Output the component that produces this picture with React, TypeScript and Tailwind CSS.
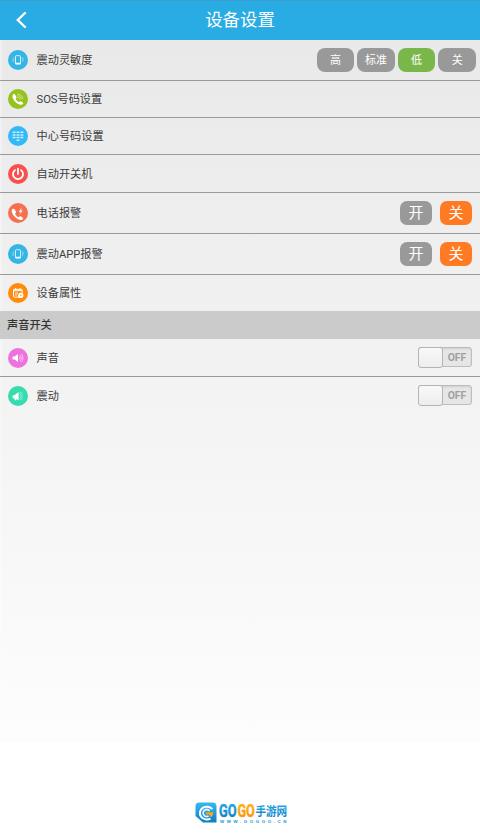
import React from "react";

type IconName =
  | "shake"
  | "sos"
  | "keypad"
  | "power"
  | "call"
  | "device"
  | "sound"
  | "vibrate";

const HANDSET =
  "M5.2 5.4 C4.1 6.3 4.2 8 5.2 9.9 C6.7 12.6 9 14.7 11.6 15.6 C13 16 14.4 15.8 15.1 14.8 C15.4 14.3 15.2 13.9 14.8 13.6 L12.9 12.3 C12.4 12 11.9 12.1 11.5 12.6 L10.9 13.2 C9.5 12.5 8.3 11.3 7.6 9.8 L8.2 9.1 C8.6 8.7 8.6 8.3 8.4 7.8 L7.2 5.7 C6.8 5 5.9 4.8 5.2 5.4 Z";

const glyphs: Record<IconName, { color: string; art: React.ReactNode }> = {
  shake: {
    color: "#33b5e5",
    art: (
      <g fill="none" stroke="#fff">
        <rect x="7.5" y="5.7" width="5" height="8.3" rx="0.8" strokeWidth="0.9" opacity="0.9" />
        <path d="M7.5 13.5h5" strokeWidth="1.6" opacity="0.9" />
        <path d="M5.6 7.2v4.6M14.4 7.2v4.6" strokeWidth="0.7" opacity="0.5" />
        <path d="M4.4 9v3M15.6 7.8v3" strokeWidth="0.6" opacity="0.4" />
      </g>
    ),
  },
  sos: {
    color: "#97c11c",
    art: (
      <g>
        <path d={HANDSET} fill="#fff" />
        <g fill="none" stroke="#fff" strokeWidth="0.9" opacity="0.6">
          <path d="M9 8.2c1.4.2 2.4 1.1 2.8 2.5" />
          <path d="M9.2 6.5c2.2.3 3.7 1.7 4.2 3.9" />
          <path d="M9.4 4.9c3 .3 5.1 2.3 5.6 5.2" />
        </g>
      </g>
    ),
  },
  keypad: {
    color: "#33b9f5",
    art: (
      <path
        d="M4.6 6.2h3M8.5 6.2h3M12.4 6.2h3M4.6 8.9h3M8.5 8.9h3M12.4 8.9h3M4.6 11.6h3M8.5 11.6h3M12.4 11.6h3M8.5 14.3h3"
        stroke="#fff"
        strokeWidth="1.5"
        opacity="0.75"
      />
    ),
  },
  power: {
    color: "#f9504f",
    art: (
      <g fill="none" stroke="#fff" strokeWidth="1.8" strokeLinecap="round">
        <path d="M7 6.1a5 5 0 1 0 6 0" />
        <path d="M10 4.6v5.4" />
      </g>
    ),
  },
  call: {
    color: "#f5704e",
    art: (
      <g fill="#fff">
        <path d={HANDSET} transform="translate(-1 .3) scale(1.06)" />
        <path d="M13.7 4.6 L10.6 8.8 L12.5 8.7 L11.4 12 L14.9 7.4 L13 7.5 Z" opacity="0.85" />
      </g>
    ),
  },
  device: {
    color: "#ff8a0c",
    art: (
      <g>
        <rect x="5.5" y="6.3" width="8.6" height="7.8" rx="0.7" fill="none" stroke="#fff" strokeWidth="1" />
        <path d="M5.5 7.6h8.6M7.6 5.2v2M12 5.2v2M7 10h3M7 12h2" stroke="#fff" strokeWidth="1" />
        <circle cx="12.7" cy="12.4" r="2.7" fill="#fff" />
        <path d="M12.7 11v1.6h1.1" fill="none" stroke="#ff8a0c" strokeWidth="0.7" />
      </g>
    ),
  },
  sound: {
    color: "#ee72dc",
    art: (
      <g>
        <path d="M4.6 8.6h2.2L10 6v8l-3.2-2.6H4.6z" fill="#fff" />
        <g fill="none" stroke="#fff" strokeWidth="0.8" opacity="0.7">
          <path d="M11.2 8.4a2.4 2.4 0 0 1 0 3.2" />
          <path d="M12.2 7a4.4 4.4 0 0 1 0 6" />
          <path d="M13.3 5.7a6.3 6.3 0 0 1 0 8.6" />
        </g>
      </g>
    ),
  },
  vibrate: {
    color: "#34dcae",
    art: (
      <g>
        <path d="M4.6 9.4l2.2-.5L10.6 6v8.4L8.4 12.8v1.5H6.6v-2H4.6z" fill="#fff" />
        <path
          d="M12.6 5.8l-.8 1.5.8 1.4-.8 1.5.8 1.4-.8 1.4.7 1.2M14.4 5.8l-.8 1.5.8 1.4-.8 1.5.8 1.4-.8 1.4.7 1.2"
          fill="none"
          stroke="#fff"
          strokeWidth="0.6"
          opacity="0.7"
        />
      </g>
    ),
  },
};

const RoundIcon: React.FC<{ name: IconName }> = ({ name }) => (
  <svg viewBox="0 0 20 20" className="h-5 w-5 shrink-0">
    <circle cx="10" cy="10" r="10" fill={glyphs[name].color} />
    {glyphs[name].art}
  </svg>
);

interface RowProps {
  icon: IconName;
  label: string;
  height: string;
  divider?: boolean;
  children?: React.ReactNode;
}

const Row: React.FC<RowProps> = ({ icon, label, height, divider = true, children }) => (
  <div
    className={`flex items-center px-2 ${height} ${
      divider ? "border-b border-[#9a9a9a]" : ""
    }`}
  >
    <RoundIcon name={icon} />
    <span className="ml-[8.5px] flex-1 pt-[2px] text-[11.2px] leading-4 text-[#3c3c3c]">
      {label}
    </span>
    {children}
  </div>
);

const levels = ["高", "标准", "低", "关"];

const LevelPicker: React.FC<{ active: string }> = ({ active }) => (
  <div className="-mr-[4px] flex gap-[3px]">
    {levels.map((level) => (
      <button
        key={level}
        className={`h-6 w-[37.6px] rounded-[8px] text-[11px] leading-none text-white ${
          level === active ? "bg-[#7ab74b]" : "bg-[#999999]"
        }`}
      >
        {level}
      </button>
    ))}
  </div>
);

const OnOff: React.FC = () => (
  <div className="flex gap-2">
    <button className="h-6 w-8 rounded-[7px] bg-[#999999] text-[15px] leading-none text-white">
      开
    </button>
    <button className="h-6 w-8 rounded-[7px] bg-[#ff7a22] text-[15px] leading-none text-white">
      关
    </button>
  </div>
);

const Toggle: React.FC = () => (
  <div className="mb-px flex h-5 w-[54px] rounded-[3px] border border-[#bdbdbd] bg-[#e6e6e6] shadow-[inset_0_1px_2px_rgba(0,0,0,0.1)]">
    <div className="-ml-px -mt-px h-[21px] w-[25px] rounded-[3px] border border-[#b4b4b4] bg-linear-to-b from-[#f9f9f9] to-[#ededed]" />
    <span className="flex flex-1 items-center justify-center pt-[3px] font-['Roboto',sans-serif] text-[10.4px] font-bold leading-none text-[#a0a0a0]">
      OFF
    </span>
  </div>
);

const Logo: React.FC = () => (
  <div className="flex h-[22px] w-[93px] items-start">
    <svg viewBox="0 0 22 22" className="h-[22px] w-[22px] shrink-0">
      <defs>
        <linearGradient id="badge" x1="0" y1="0" x2="0" y2="1">
          <stop offset="0" stopColor="#39b9ee" />
          <stop offset="1" stopColor="#087fc8" />
        </linearGradient>
      </defs>
      <path d="M4 .5H17.5Q21.5 .5 21.5 4.5V20.5H8L.5 14V4Q.5 .5 4 .5Z" fill="url(#badge)" />
      <path d="M17.4 7.2A7 6.4 0 1 0 15.5 16.6" fill="none" stroke="#fff" strokeWidth="2" />
      <path d="M14.6 9A3.6 3.4 0 1 0 13.6 14" fill="none" stroke="#e6f7ff" strokeWidth="1.7" />
      <path d="M10.8 10.2h7.6q0 3.4-2.6 5.2l-1.6-2.8h-3.4z" fill="#ffa516" />
    </svg>
    <svg viewBox="0 0 70 22" className="ml-px h-[22px] w-[70px] shrink-0 overflow-visible">
      <defs>
        <linearGradient id="blueText" x1="0" y1="0" x2="0" y2="1">
          <stop offset="0" stopColor="#27b0ec" />
          <stop offset="1" stopColor="#0878bf" />
        </linearGradient>
        <linearGradient id="orangeText" x1="0" y1="0" x2="0" y2="1">
          <stop offset="0" stopColor="#ffbd18" />
          <stop offset="1" stopColor="#f98a08" />
        </linearGradient>
      </defs>
      <g className="font-['Roboto',sans-serif] text-[19px] font-bold" strokeWidth="0.5">
        <text
          x="1"
          y="15.3"
          textLength="17.6"
          lengthAdjust="spacingAndGlyphs"
          fill="url(#blueText)"
          stroke="url(#blueText)"
        >
          GO
        </text>
        <text
          x="19.4"
          y="15.3"
          textLength="17.4"
          lengthAdjust="spacingAndGlyphs"
          fill="url(#orangeText)"
          stroke="url(#orangeText)"
        >
          GO
        </text>
      </g>
      <text
        x="37.4"
        y="14.3"
        textLength="31.8"
        lengthAdjust="spacingAndGlyphs"
        fill="url(#blueText)"
        className="font-['Noto_Sans_CJK_SC',sans-serif] text-[12.5px] font-bold"
      >
        手游网
      </text>
      <text
        x="2"
        y="20.8"
        textLength="66.5"
        fill="#1593d3"
        className="font-['Liberation_Sans',sans-serif] text-[4.4px] font-bold"
      >
        WWW.GOGGO.CN
      </text>
    </svg>
  </div>
);

const App: React.FC = () => {
  return (
    <div className="flex h-[833px] w-[480px] flex-col bg-white font-['Roboto','Noto_Sans_CJK_SC',sans-serif]">
      <header className="grid h-10 shrink-0 grid-cols-[48px_1fr_48px] items-center border-t border-[#3b9dcb] bg-[#29abe4] pb-[2px]">
        <svg viewBox="0 0 12 18" className="ml-[15px] h-[18px] w-3">
          <path
            d="M10 2 L2.8 9 L10 16"
            fill="none"
            stroke="#fff"
            strokeWidth="2.4"
            strokeLinecap="round"
          />
        </svg>
        <h1 className="text-center text-[17.4px] leading-6 text-white">设备设置</h1>
      </header>

      <main className="h-[702px] shrink-0 border-l-2 border-white/30 bg-linear-to-b from-[#e9e9e9] to-[#fdfdfd] bg-origin-border">
        <div className="-ml-[2px]">
          <Row icon="shake" label="震动灵敏度" height="h-[41px]">
            <LevelPicker active="低" />
          </Row>
          <Row icon="sos" label="SOS号码设置" height="h-[37px]" />
          <Row icon="keypad" label="中心号码设置" height="h-[37px]" />
          <Row icon="power" label="自动开关机" height="h-[38px]" />
          <Row icon="call" label="电话报警" height="h-[41px]">
            <OnOff />
          </Row>
          <Row icon="shake" label="震动APP报警" height="h-[41px]">
            <OnOff />
          </Row>
          <Row icon="device" label="设备属性" height="h-[36px]" divider={false} />
          <h2 className="flex h-7 items-center bg-[#cbcbcb] pl-[7px] pt-[2px] text-[11.2px] font-medium text-[#333333]">
            声音开关
          </h2>
          <Row icon="sound" label="声音" height="h-[38px]">
            <Toggle />
          </Row>
          <Row icon="vibrate" label="震动" height="h-[37px]" divider={false}>
            <Toggle />
          </Row>
        </div>
      </main>

      <footer className="flex flex-1 justify-center pl-[2px] pt-[60px]">
        <Logo />
      </footer>
    </div>
  );
};

export default App;
